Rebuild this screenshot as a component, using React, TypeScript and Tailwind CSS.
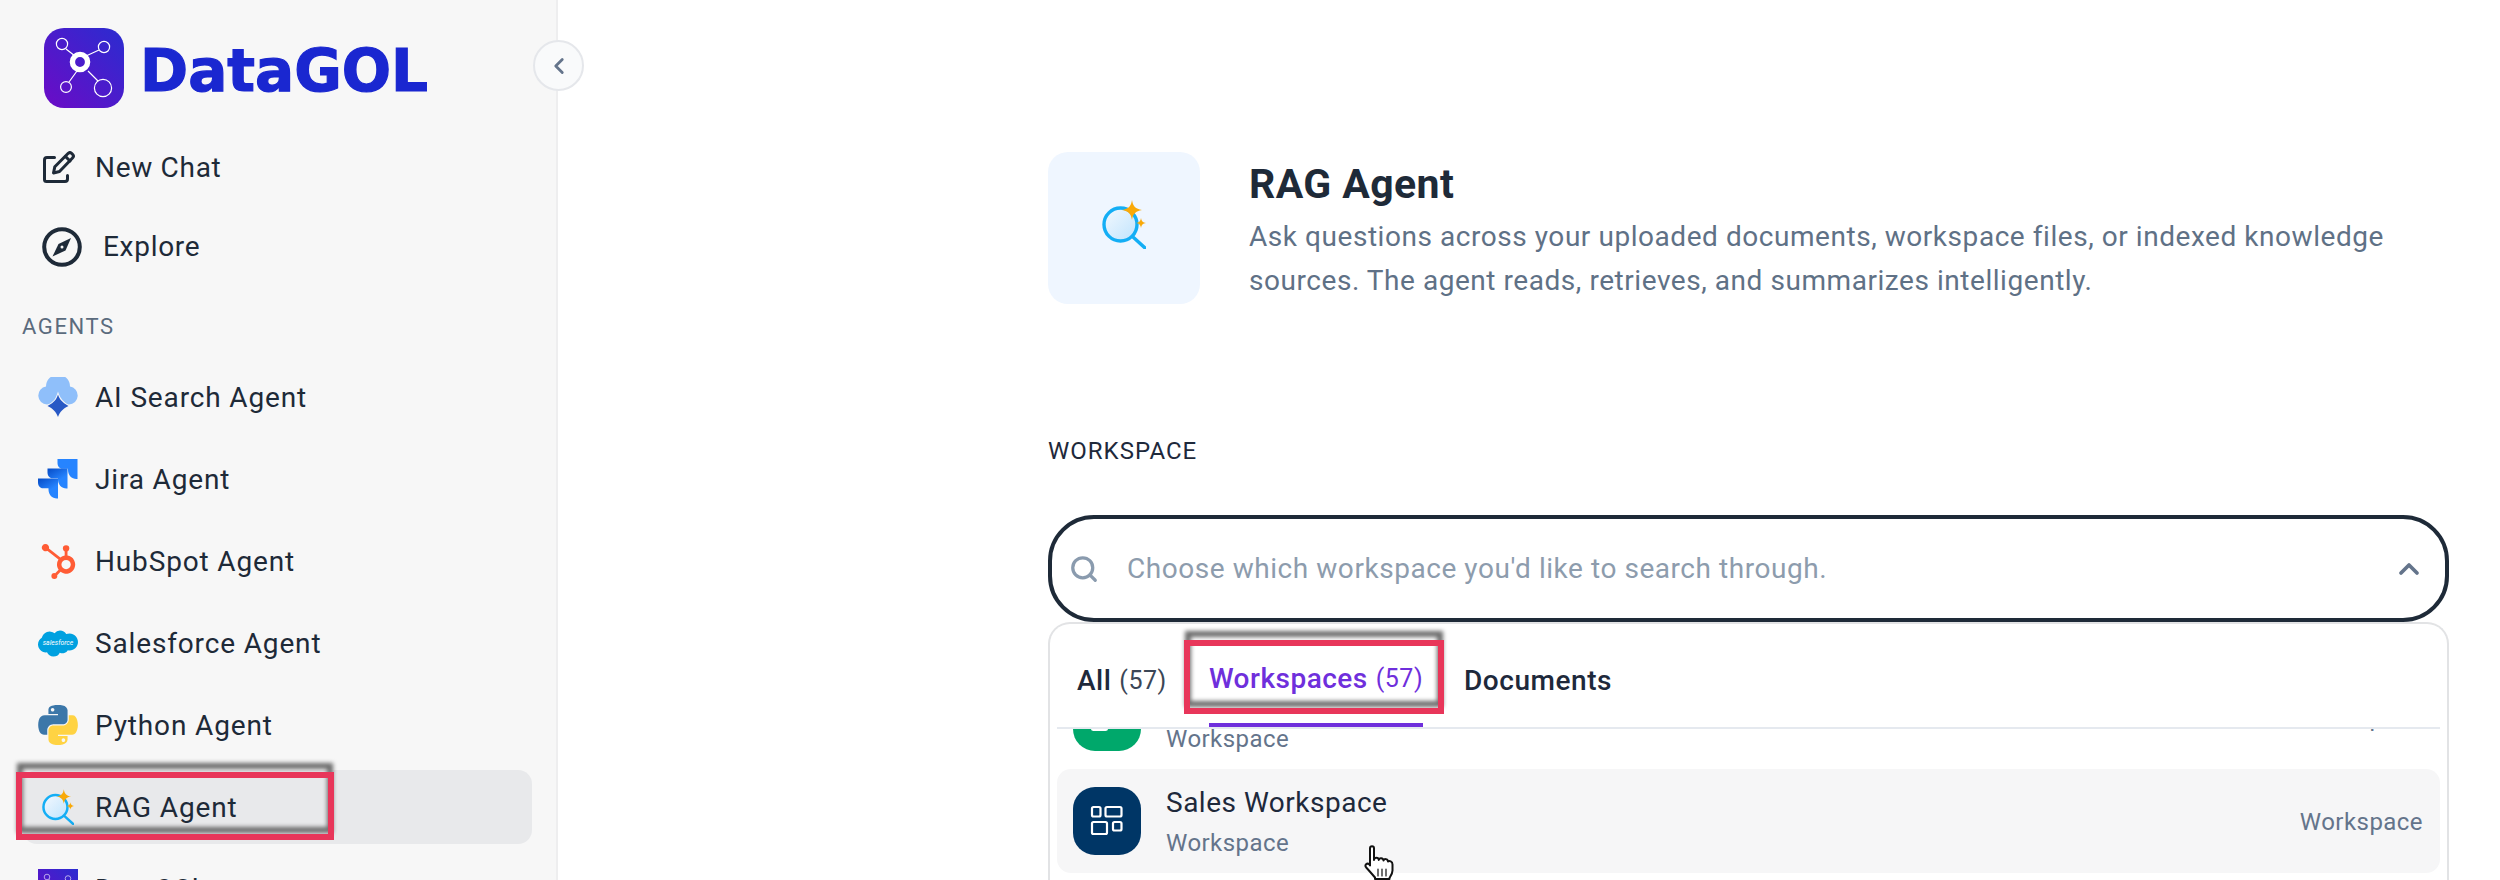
import { ChevronLeft, ChevronUp, Search } from "lucide-react";
import { SiHubspot } from "react-icons/si";

const bodyFont = "font-['Roboto','Liberation_Sans',sans-serif]";

function LogoArt() {
  return (
    <>
      <defs>
        <linearGradient id="logoBg" x1="1" y1="0" x2="0" y2="1">
          <stop offset="0" stopColor="#2a2cd0" />
          <stop offset="1" stopColor="#6c0bc6" />
        </linearGradient>
      </defs>
      <rect width="80" height="80" fill="url(#logoBg)" />
      <g stroke="#fff" strokeWidth="1.2" fill="none">
        <path d="M22 21 31 28M42 28 55 22M33 43 25 54M44 43 54 53" />
        <circle cx="18" cy="16" r="5.6" />
        <circle cx="60" cy="19" r="5.6" />
        <circle cx="22" cy="59" r="5.4" />
        <circle cx="59" cy="60" r="8.6" />
        <circle cx="36" cy="34" r="7.6" strokeWidth="5.4" />
      </g>
    </>
  );
}

function Logo() {
  return (
    <div className="h-[80px] w-[80px] overflow-hidden rounded-[20px]">
      <svg viewBox="0 0 80 80" className="h-full w-full">
        <LogoArt />
      </svg>
    </div>
  );
}

function EditIcon() {
  return (
    <svg viewBox="0 0 32 32" className="h-[32px] w-[32px]" fill="none" stroke="#1e2a38" strokeWidth="3" strokeLinecap="round" strokeLinejoin="round">
      <path d="M11.500 6.500H4a2.500 2.500 0 0 0-2.500 2.500v19.500A2 2 0 0 0 3.500 30.500h18.500a2.500 2.500 0 0 0 2.500-2.500V24.500" />
      <path d="M10.500 22l1.300-6.300L25 2.500a2.700 2.700 0 0 1 3.800 0l.7.700a2.700 2.700 0 0 1 0 3.800L16.500 20.500z" />
      <path d="M22.500 5.500l4.500 4.500" />
    </svg>
  );
}

function CompassIcon() {
  return (
    <svg viewBox="0 0 40 40" className="h-[40px] w-[40px]" fill="none">
      <circle cx="20" cy="20" r="17.800" stroke="#1e2a38" strokeWidth="4" />
      <path d="M29 11 23.500 23.500 10.500 29.500 16.500 17z" fill="#1e2a38" />
      <circle cx="20" cy="20" r="1.500" fill="#f7f7f7" />
    </svg>
  );
}

function CloudIcon() {
  return (
    <svg viewBox="0 0 40 40" className="h-[40px] w-[40px]">
      <path d="M9 27.500a9 9 0 0 1-1-17.900 12 12 0 0 1 24 0 9 9 0 0 1-1 17.900z" fill="#8fbffa" />
      <path d="M20 17.500c1.600 4.600 3.600 7.600 10.500 11.500-5.500 2.600-8.300 5.600-10.500 11-2.200-5.400-5-8.400-10.500-11C17 25.100 18.400 22.100 20 17.500z" fill="#2859c5" stroke="#f7f7f7" strokeWidth="2" paintOrder="stroke" />
    </svg>
  );
}

function JiraIcon() {
  const piece = "M0 0H20V20H19C14 20 10.500 16 10.500 11V9.800H5C2 9.800 0 7 0 4z";
  return (
    <svg viewBox="0 0 40 40" className="h-[40px] w-[40px]">
      <defs>
        <linearGradient id="jiraA" x1="0.2" y1="0" x2="0.8" y2="1">
          <stop offset="0" stopColor="#0a52cc" />
          <stop offset="0.6" stopColor="#2684ff" />
        </linearGradient>
      </defs>
      <path d={piece} transform="translate(19.500 0)" fill="#2684ff" />
      <path d={piece} transform="translate(9.500 9.500)" fill="url(#jiraA)" />
      <path d={piece} transform="translate(0 19.500)" fill="url(#jiraA)" />
    </svg>
  );
}

function SalesforceIcon() {
  return (
    <svg viewBox="0 0 40 28" className="h-[28px] w-[40px]">
      <path d="M16.500 4.200A7.200 7.200 0 0 1 22 1.500c2.700 0 5 1.400 6.200 3.600a8.500 8.500 0 0 1 3.400-.7c4.600 0 8.400 3.800 8.400 8.500s-3.800 8.500-8.400 8.500c-.6 0-1.100-.1-1.700-.2a6.200 6.200 0 0 1-8.100 2.500A7.100 7.100 0 0 1 9 23.300a5.900 5.900 0 0 1-1.200.1C3.500 23.400 0 19.900 0 15.600c0-2.900 1.500-5.400 3.800-6.800a8.100 8.100 0 0 1 12.700-4.600z" fill="#00a1e0" />
      <text x="20" y="15.500" textAnchor="middle" fontSize="6.800" fontStyle="italic" fill="#fff" fontFamily="Roboto, sans-serif">salesforce</text>
    </svg>
  );
}

function PythonIcon() {
  return (
    <svg viewBox="0 0 111 112" className="h-[40px] w-[40px]">
      <path d="M54.919.001C50.335.022 45.958.413 42.106 1.095 30.760 3.099 28.700 7.295 28.700 15.032V25.250H55.513V28.656H18.638C10.845 28.656 4.022 33.340 1.888 42.250-.574 52.463-.683 58.836 1.888 69.500 3.794 77.438 8.345 83.094 16.138 83.094H25.357V70.844C25.357 61.994 33.014 54.188 42.106 54.188H68.888C76.342 54.188 82.294 48.050 82.294 40.563V15.032C82.294 7.766 76.164 2.307 68.888 1.095 64.282.328 59.503-.020 54.919.001ZM40.419 8.220C43.189 8.220 45.450 10.518 45.450 13.345 45.450 16.162 43.189 18.439 40.419 18.439 37.639 18.439 35.388 16.162 35.388 13.345 35.388 10.518 37.639 8.220 40.419 8.220Z" fill="#3c77a9" />
      <path d="M85.638 28.656V40.563C85.638 49.794 77.812 57.563 68.888 57.563H42.106C34.770 57.563 28.700 63.842 28.700 71.188V96.720C28.700 103.986 35.018 108.260 42.106 110.345 50.594 112.841 58.734 113.292 68.888 110.345 75.638 108.390 82.294 104.457 82.294 96.720V86.501H55.513V83.094H95.700C103.493 83.094 106.397 77.658 109.107 69.500 111.906 61.101 111.787 53.024 109.107 42.250 107.181 34.493 103.503 28.656 95.700 28.656ZM70.638 93.313C73.418 93.313 75.669 95.590 75.669 98.407 75.669 101.234 73.418 103.532 70.638 103.532 67.868 103.532 65.607 101.234 65.607 98.407 65.607 95.590 67.868 93.313 70.638 93.313Z" fill="#ffd343" />
    </svg>
  );
}

function RagIcon({ id, className }: { id: string; className: string }) {
  return (
    <svg viewBox="0 0 44 49" className={className}>
      <defs>
        <linearGradient id={id} x1="0" y1="0" x2="1" y2="1">
          <stop offset="0" stopColor="#f4f9fe" />
          <stop offset="1" stopColor="#bfe3fd" />
        </linearGradient>
      </defs>
      <circle cx="18.500" cy="24.500" r="16.500" fill={`url(#${id})`} stroke="#14aef5" strokeWidth="3.400" />
      <path d="M31 37 43 48" stroke="#14aef5" strokeWidth="3.400" strokeLinecap="round" />
      <path d="M30 0c.8 6 3.500 9 10 10-6.500 1-9.200 4-10 10-.8-6-3.500-9-10-10 6.500-1 9.200-4 10-10z" fill="#f9a908" />
      <path d="M39 18c.4 3 1.700 4.500 5 5-3.300.5-4.600 2-5 5-.4-3-1.700-4.500-5-5 3.300-.5 4.600-2 5-5z" fill="#f9a908" />
    </svg>
  );
}

function SpacesIcon() {
  return (
    <svg viewBox="0 0 68 68" className="h-[68px] w-[68px] rounded-[22px]" fill="none" stroke="#fff" strokeWidth="2.200" strokeLinejoin="round">
      <rect x="19" y="20" width="8.500" height="9.500" rx="1.500" />
      <rect x="32.500" y="20" width="16" height="9.500" rx="1.500" />
      <rect x="19" y="35" width="15" height="12" rx="1.500" />
      <rect x="40" y="35" width="8.500" height="8.500" rx="1.500" />
    </svg>
  );
}

function HandCursor() {
  return (
    <svg viewBox="0 0 30 36" className="h-[36px] w-[30px]" fill="#fff" stroke="#111" strokeWidth="2" strokeLinejoin="round" strokeLinecap="round">
      <path d="M6 3.500c0-3 4-3 4 0V15c.3-3 4.500-3 4.800 0 .3-2.500 4.400-2.500 4.700.5.500-2 4.300-2 4.500 1 1.200-1 4.500-.5 4.500 3v6c0 3-1.500 5-3 7.500v1H11v-1.500C8 29 5 25.500 2.200 22.500c-2-2.500.8-5 3-3.200L6 20.500z" />
      <path d="M14 24v7M18 24v7M22 24v7" strokeWidth="1.200" />
    </svg>
  );
}

// red annotation frame with the blurred grey copy peeking out above it
function Callout({ className }: { className: string }) {
  return (
    <div className={`pointer-events-none absolute ${className}`}>
      <div className="absolute inset-x-[1px] bottom-[7px] -top-[9px] border-[6px] border-[#6b6b6b] blur-[2px]" />
      <div className="absolute inset-0 border-[6px] border-[#e8365a]" />
    </div>
  );
}

const agents = [
  { label: "AI Search Agent", icon: <CloudIcon /> },
  { label: "Jira Agent", icon: <JiraIcon /> },
  { label: "HubSpot Agent", icon: <SiHubspot size={35} color="#ff5c35" /> },
  { label: "Salesforce Agent", icon: <SalesforceIcon /> },
  { label: "Python Agent", icon: <PythonIcon /> },
  { label: "RAG Agent", icon: <RagIcon id="ragSide" className="h-[36px] w-[32px]" />, active: true },
  {
    label: "Data2Chat",
    icon: (
      <svg viewBox="0 0 80 80" className="h-[40px] w-[40px]">
        <LogoArt />
      </svg>
    ),
  },
];

function Sidebar() {
  return (
    <aside className="relative h-[880px] w-[558px] shrink-0 border-r-2 border-[#eeeeef] bg-[#f7f7f7]">
      <div className="flex items-center gap-[16px] pl-[44px] pt-[28px]">
        <Logo />
        <span className="h-[80px] pt-[6px] font-['DejaVu_Sans',sans-serif] text-[58px] font-bold leading-[74px] text-[#1a27d0] [-webkit-text-stroke:1.200px_#1a27d0]">DataGOL</span>
      </div>

      <div className="mt-[19px] flex h-[80px] items-center gap-[20px] pl-[43px]">
        <EditIcon />
        <span className="pt-[2px] text-[28px] tracking-[0.7px] text-[#1e2a38]">New Chat</span>
      </div>
      <div className="flex h-[79px] items-center gap-[21px] pl-[42px]">
        <CompassIcon />
        <span className="text-[28px] tracking-[0.7px] text-[#1e2a38]">Explore</span>
      </div>

      <div className="mt-[28px] pl-[22px] text-[22px] leading-[26px] tracking-[1.600px] text-[#5b6b7d]">AGENTS</div>

      <nav className="ml-[23px] mt-[20px] flex w-[509px] flex-col gap-[8px]">
        {agents.map((a) => (
          <div
            key={a.label}
            className={`flex h-[74px] shrink-0 items-center gap-[17px] rounded-[14px] pl-[15px] ${a.active ? "bg-[#e8e9eb]" : ""}`}
          >
            <div className="flex h-[40px] w-[40px] items-center justify-center">{a.icon}</div>
            <span className="pt-[2px] text-[28px] tracking-[0.85px] text-[#1e2a38]">{a.label}</span>
          </div>
        ))}
      </nav>

      <Callout className="left-[16px] top-[772px] h-[68px] w-[318px]" />

      <button className="absolute -right-[28px] top-[40px] flex h-[51px] w-[51px] items-center justify-center rounded-full border-2 border-[#e5e7eb] bg-[#f9fafb] text-[#64748b]">
        <ChevronLeft size={26} strokeWidth={2.6} />
      </button>
    </aside>
  );
}

function WorkspaceRow({ title, hover, iconBg }: { title?: string; hover?: boolean; iconBg: string }) {
  return (
    <div className={`relative flex h-[104px] shrink-0 items-center rounded-[14px] pl-[16px] pr-[17px] ${hover ? "bg-[#f6f6f7]" : ""}`}>
      <div className={`h-[68px] w-[68px] shrink-0 rounded-[22px] ${iconBg}`}>
        <SpacesIcon />
      </div>
      <div className="ml-[25px] flex flex-1 flex-col pt-[4px]">
        <span className="block h-[40px] text-[28px] leading-[40px] tracking-[0.5px] text-[#1e293b]">{title}</span>
        <span className="text-[24px] leading-[40px] tracking-[0.45px] text-[#64748b]">Workspace</span>
      </div>
      <span className="pt-[2px] text-[24px] tracking-[0.45px] text-[#64748b]">Workspace</span>
      {hover && (
        <div className="absolute left-[307px] top-[76px]">
          <HandCursor />
        </div>
      )}
    </div>
  );
}

function WorkspacePicker() {
  return (
    <div className="flex flex-1 flex-col">
      <div className="flex h-[107px] shrink-0 items-center rounded-[46px] border-4 border-[#1e2a38] bg-white pl-[17px] pr-[20px]">
        <Search size={30} strokeWidth={2.6} className="text-[#8a9bae]" />
        <span className="ml-[28px] flex-1 text-[28px] tracking-[0.55px] text-[#8d9cad]">Choose which workspace you'd like to search through.</span>
        <ChevronUp size={32} strokeWidth={2.8} className="text-[#64748b]" />
      </div>

      <div className="relative flex min-h-0 flex-1 flex-col overflow-hidden rounded-t-[22px] border-2 border-b-0 border-[#e2e3e5] bg-white">
        <div className="mx-[7px] flex h-[105px] shrink-0 items-end border-b-2 border-[#e5e9ef] pl-[20px]">
          <div className="flex h-[96px] w-[132px] items-center pt-[4px]">
            <span className="text-[28px] font-medium tracking-[0.5px] text-[#1e293b]">All</span>
            <span className="ml-[8px] text-[25px] tracking-[0.5px] text-[#3b4656]">(57)</span>
          </div>
          <div className="flex h-[96px] w-[214px] items-center justify-center border-b-4 border-[#6f2fdc] pt-[4px]">
            <span className="text-[28px] font-medium tracking-[0.5px] text-[#6f2fdc]">Workspaces</span>
            <span className="ml-[8px] text-[25px] tracking-[0.5px] text-[#6f2fdc]">(57)</span>
          </div>
          <div className="ml-[41px] flex h-[96px] items-center pt-[4px]">
            <span className="text-[28px] font-medium tracking-[0.55px] text-[#1e293b]">Documents</span>
          </div>
        </div>

        <div className="mx-[7px] min-h-0 flex-1 overflow-hidden">
          <div className="-mt-[64px] flex flex-col">
            <WorkspaceRow iconBg="bg-[#00a86b]" />
            <WorkspaceRow title="Sales Workspace" iconBg="bg-[#003666]" hover />
          </div>
        </div>

        <Callout className="left-[134px] top-[16px] h-[74px] w-[260px]" />
      </div>
    </div>
  );
}

export default function App() {
  return (
    <div className={`flex h-[880px] w-[2500px] overflow-hidden bg-white ${bodyFont}`}>
      <Sidebar />
      <main className="ml-[490px] flex h-[880px] w-[1401px] flex-col pt-[152px]">
        <div className="flex gap-[49px]">
          <div className="flex h-[152px] w-[152px] shrink-0 items-center justify-center rounded-[20px] bg-[#eff6ff] pb-[7px]">
            <RagIcon id="ragTile" className="h-[49px] w-[44px]" />
          </div>
          <div className="pt-[8px]">
            <h1 className="text-[41px] font-bold leading-[48px] tracking-[0.4px] text-[#1e2a38]">RAG Agent</h1>
            <p className="mt-[7px] w-[1180px] text-[28px] leading-[44px] tracking-[0.55px] text-[#5f7186]">
              Ask questions across your uploaded documents, workspace files, or indexed knowledge sources. The agent reads, retrieves, and summarizes intelligently.
            </p>
          </div>
        </div>

        <div className="mt-[133px] text-[24px] leading-[28px] tracking-[1px] text-[#1e293b]">WORKSPACE</div>
        <div className="mt-[50px] flex min-h-0 flex-1 flex-col">
          <WorkspacePicker />
        </div>
      </main>
    </div>
  );
}
